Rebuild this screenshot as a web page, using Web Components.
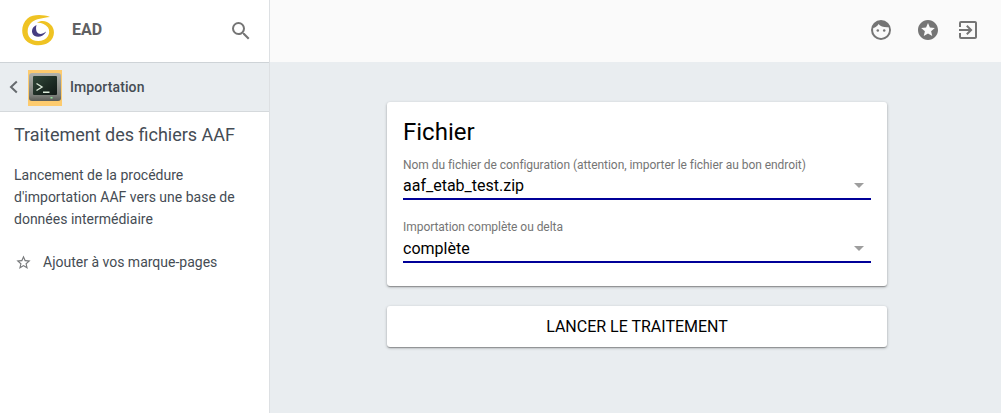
<!DOCTYPE html>
<html lang="fr"><head><meta charset="utf-8"><title>EAD</title>
<style>
html,body{margin:0;height:100%}
body{font-family:Roboto,"Liberation Sans",sans-serif;background:#e9edf0;overflow:hidden}
</style></head><body>
<app-shell>
  <side-nav slot="side">
    <nav-head></nav-head>
    <nav-crumb>Importation</nav-crumb>
    <nav-info title-text="Traitement des fichiers AAF">
      Lancement de la procédure d'importation AAF vers une base de données intermédiaire
    </nav-info>
  </side-nav>
  <top-bar slot="top"></top-bar>
  <div slot="main" style="display:contents">
    <form-card heading="Fichier">
      <select-field label="Nom du fichier de configuration (attention, importer le fichier au bon endroit)" value="aaf_etab_test.zip"></select-field>
      <select-field label="Importation complète ou delta" value="complète"></select-field>
    </form-card>
    <action-button>LANCER LE TRAITEMENT</action-button>
  </div>
</app-shell>
<script>
function def(name, html, extra){
  customElements.define(name, class extends HTMLElement{
    constructor(){super();this.attachShadow({mode:'open'}).innerHTML=html;}
    connectedCallback(){ if(extra) extra(this,this.shadowRoot); }
  });
}
def('app-shell',`<style>
:host{display:grid;grid-template-columns:270px 1fr;grid-template-rows:62px 1fr;width:1001px;height:413px;overflow:hidden}
.side{grid-row:1/3;display:block}
.top{display:block}
main{display:flex;flex-direction:column;align-items:center;padding:40px 0 0 3px;gap:20px;box-sizing:border-box}
</style>
<div class="side"><slot name="side"></slot></div>
<div class="top"><slot name="top"></slot></div>
<main><slot name="main"></slot></main>`);
def('side-nav',`<style>
:host{display:flex;flex-direction:column;height:413px;box-sizing:border-box;background:#fff;border-right:1px solid #dde0e3}
</style><slot></slot>`);
def('nav-head',`<style>
:host{display:flex;align-items:center;height:62px;flex:none;box-sizing:border-box;padding:0 16px 0 21px;color:#616161}
svg{display:block}
.name{font:700 16px/20px Roboto,sans-serif;margin-left:17px;flex:1;position:relative;top:-1px;color:#5f6062}
.logo{margin-top:-1px}
</style>
<svg class="logo" width="34" height="33" viewBox="21 14 34 33">
  <path fill="#efc323" d="M50 17C43 14.500 33 14 27.500 18.500 21.500 23.500 20.500 33.500 25 39.500 30 46 42 47 48.500 42.500 55 38 55.500 29.500 51 25 47 20.500 41 20 37 22.800 41 22.500 45.500 24 48 27.500 50.500 31.500 49 37 44 39.800 38.500 42.300 31.500 41 29 36.500 26.500 32 27.500 25.500 32 22 36 19 43 17.800 50 17Z"/>
  <path fill="#463d82" d="M36.500 25c-3.500 1.500-5 4.500-4.300 7.800.8 3.700 6 5.200 10 3 2-1.200 3.300-2.800 3.800-4.300-2.300 2-5.500 3.200-7.500 2-2.700-1.600-2.800-5.500-2-8.500Z"/>
</svg>
<span class="name">EAD</span>
<svg width="24" height="24" viewBox="0 0 24 24"><path fill="#757575" d="M15.500 14h-.79l-.28-.27A6.470 6.470 0 0 0 16 9.500 6.500 6.500 0 1 0 9.500 16c1.610 0 3.090-.59 4.230-1.570l.27.28v.79l5 4.990L20.490 19l-4.990-5zm-6 0C7.010 14 5 11.990 5 9.500S7.010 5 9.500 5 14 7.010 14 9.500 11.990 14 9.500 14z"/></svg>`);
def('nav-crumb',`<style>
:host{display:flex;align-items:center;height:50px;flex:none;box-sizing:border-box;background:#e9edf0;border-top:1px solid #ced3d7;border-bottom:1px solid #d5d9dc;color:#454c54;font:500 14px/20px Roboto,sans-serif;letter-spacing:.1px}
.chev{display:block;margin-left:7px;margin-right:7px}
.tile{width:34px;height:36px;margin-top:1px;background:#fdcb6e;display:flex;align-items:center;justify-content:center;flex:none}
.label{margin-left:8px}
</style>
<svg class="chev" width="14" height="14" viewBox="0 0 14 14" fill="none"><path d="M9.800 1.500 4 7l5.800 5.500" stroke="#666a6e" stroke-width="2"/></svg>
<span class="tile">
<svg width="32" height="30" viewBox="0 0 32 30">
  <defs><linearGradient id="f" x1="0" y1="0" x2="0" y2="1"><stop offset="0" stop-color="#b0b2ac"/><stop offset=".8" stop-color="#7d7f7a"/><stop offset="1" stop-color="#5a5c57"/></linearGradient>
  <linearGradient id="s" x1="0" y1="0" x2="1" y2="1"><stop offset="0" stop-color="#31493a"/><stop offset=".6" stop-color="#1c2a22"/><stop offset="1" stop-color="#121915"/></linearGradient></defs>
  <rect x="0" y="0" width="32" height="28" rx="3" fill="url(#f)"/>
  <rect x="4" y="3" width="24" height="19" rx="1" fill="url(#s)"/>
  <path d="M7.500 10.500 13 14l-5.500 3.500" fill="none" stroke="#dcebda" stroke-width="1.400"/>
  <rect x="14" y="18.500" width="6.500" height="1.500" fill="#dcebda"/>
  <rect x="21.500" y="24" width="2" height="1.500" fill="#8fe39a"/>
</svg></span>
<span class="label"><slot></slot></span>`);
def('nav-info',`<style>
:host{display:block;padding:11px 14px;color:#454c54}
h2{margin:0;font:400 18px/24px Roboto,sans-serif}
p{margin:16.500px 0 0;font:400 14px/22.400px Roboto,sans-serif;width:232px}
.mark{display:flex;align-items:center;margin-top:21.300px;font:400 14px/20px Roboto,sans-serif}
svg{display:block;margin:0 11px 0 1px}
</style>
<h2></h2><p><slot></slot></p>
<div class="mark"><svg width="17" height="17" viewBox="0 0 24 24"><path fill="#77797b" d="M22 9.240l-7.190-.62L12 2 9.190 8.630 2 9.240l5.460 4.730L5.820 21 12 17.270 18.180 21l-1.630-7.030L22 9.240zM12 15.400l-3.760 2.270 1-4.280-3.320-2.880 4.380-.38L12 6.100l1.710 4.040 4.380.38-3.320 2.880 1 4.280L12 15.400z"/></svg>Ajouter à vos marque-pages</div>`,
(el,r)=>{r.querySelector('h2').textContent=el.getAttribute('title-text');});
def('top-bar',`<style>
:host{display:flex;align-items:center;justify-content:flex-end;height:62px;box-sizing:border-box;background:#fafafa;padding:0 21px 2px 0;gap:16px}
svg{display:block}
.face{margin-right:7px}
</style>
<svg class="face" width="24" height="24" viewBox="0 0 24 24"><path fill="#757575" fill-rule="evenodd" d="M12 2a10 10 0 1 0 0 20 10 10 0 0 0 0-20ZM4.300 10C6.500 9.500 8.500 8 9.500 6 11.500 8.500 15 9.500 19.600 9.200A8 8 0 1 1 4.300 10Z"/><circle cx="8.800" cy="12.600" r="1.250" fill="#757575"/><circle cx="15.200" cy="12.600" r="1.250" fill="#757575"/></svg>
<svg width="24" height="24" viewBox="0 0 24 24"><path fill="#757575" d="M12 2C6.470 2 2 6.500 2 12s4.470 10 10 10c5.500 0 10-4.500 10-10S17.500 2 12 2zm4.240 16L12 15.450 7.770 18l1.120-4.810-3.730-3.230 4.920-.42L12 5l1.920 4.530 4.920.42-3.730 3.230L16.240 18z"/></svg>
<svg width="24" height="24" viewBox="0 0 24 24"><path fill="#757575" d="M10.090 15.590 11.500 17l5-5-5-5-1.410 1.410L12.670 11H3v2h9.670l-2.580 2.590zM19 3H5a2 2 0 0 0-2 2v4h2V5h14v14H5v-4H3v4a2 2 0 0 0 2 2h14c1.100 0 2-.9 2-2V5c0-1.100-.9-2-2-2z"/></svg>`);
const shadow='box-shadow:0 1px 3px rgba(0,0,0,.3),0 1px 1px rgba(0,0,0,.14),0 2px 1px -1px rgba(0,0,0,.12);';
def('form-card',`<style>
:host{display:block;width:500px;height:184px;box-sizing:border-box;padding:16px 16px 0;background:#fff;border-radius:3px;${shadow}}
h2{margin:0 0 11px;font:400 24px/28px Roboto,sans-serif;color:#000}
.fields{display:flex;flex-direction:column;gap:19px}
</style><h2></h2><div class="fields"><slot></slot></div>`,
(el,r)=>{r.querySelector('h2').textContent=el.getAttribute('heading');});
def('select-field',`<style>
:host{display:block;width:468px;color:#000}
:host(:last-child) .box{height:28px;padding-top:1px}
.lab{font:400 12px/16px Roboto,sans-serif;letter-spacing:-.05px;color:#757575;white-space:nowrap}
.box{display:flex;align-items:center;justify-content:space-between;height:27px;box-sizing:border-box;border-bottom:2px solid #000098;font:400 16px/24px Roboto,sans-serif;padding-right:7px}
.arrow{width:0;height:0;border-left:5px solid transparent;border-right:5px solid transparent;border-top:5px solid #9e9e9e}
</style><div class="lab"></div><div class="box"><span class="v"></span><span class="arrow"></span></div>`,
(el,r)=>{r.querySelector('.lab').textContent=el.getAttribute('label');r.querySelector('.v').textContent=el.getAttribute('value');});
def('action-button',`<style>
:host{display:flex;align-items:center;justify-content:center;width:500px;height:41px;background:#fff;border-radius:3px;color:#000;font:400 16px/20px Roboto,sans-serif;${shadow}}
</style><slot></slot>`);
</script>
</body></html>
